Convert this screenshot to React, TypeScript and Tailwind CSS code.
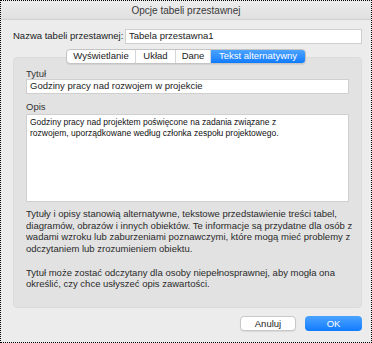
import React from "react";

const tabs = [
  { label: "Wyświetlanie", w: "w-[69px]" },
  { label: "Układ", w: "w-[40px]" },
  { label: "Dane", w: "w-[35px]" },
  { label: "Tekst alternatywny", w: "w-[94px]" },
];

const App = () => {
  return (
    <div className="w-[372px] h-[343px] border border-dotted border-black bg-[#ececec] flex flex-col font-['Liberation_Sans',Arial,sans-serif] text-[9.5px] text-[#222]">
      <div className="h-[19px] shrink-0 flex items-center justify-center bg-gradient-to-b from-[#ececec] to-[#e0e0e0] border-b border-[#d0d0d0] text-[10px] text-[#3a3a3a]">
        Opcje tabeli przestawnej
      </div>

      <div className="flex items-center mt-[9px] pl-[12px] pr-[9px]">
        <span className="w-[112px] text-[#222]">Nazwa tabeli przestawnej:</span>
        <div className="flex-1 h-[15px] bg-white border border-[#cfcfcf] flex items-center pl-[3px]">
          Tabela przestawna1
        </div>
      </div>

      <div className="flex justify-center mt-[5px] relative z-10 -mb-[7px]">
        <div className="flex h-[15px] rounded-[4px] border border-[#c4c4c4] bg-white shadow-[0_1px_1px_rgba(0,0,0,0.08)] overflow-hidden">
          {tabs.map((t, i) => (
            <div
              key={t.label}
              className={
                i === 3
                  ? `${t.w} flex items-center justify-center bg-gradient-to-b from-[#4aa3ff] to-[#0b7bff] text-white`
                  : `${t.w} flex items-center justify-center border-r border-[#d6d6d6] text-[#222]`
              }
            >
              {t.label}
            </div>
          ))}
        </div>
      </div>

      <div className="mx-[12px] mr-[9px] h-[251px] rounded-[4px] bg-[#e2e2e2] border border-[#dcdcdc] pt-[10px] px-[12px] flex flex-col">
        <div className="text-[#333] leading-[11px]">Tytuł</div>
        <div className="h-[15px] bg-white border border-[#cfcfcf] flex items-center pl-[3px] text-[#222]">
          Godziny pracy nad rozwojem w projekcie
        </div>
        <div className="mt-[7px] text-[#333] leading-[11px]">Opis</div>
        <div className="mt-[2px] h-[88px] bg-white border border-[#cfcfcf] px-[3px] pt-[2px] text-[8.5px] leading-[10.7px] text-[#111] whitespace-nowrap">
          Godziny pracy nad projektem poświęcone na zadania związane z
          <br />
          rozwojem, uporządkowane według członka zespołu projektowego.
        </div>
        <div className="mt-[6px] leading-[11.7px] text-[#2a2a2a] whitespace-nowrap">
          <p>
            Tytuły i opisy stanowią alternatywne, tekstowe przedstawienie treści tabel,
            <br />
            diagramów, obrazów i innych obiektów. Te informacje są przydatne dla osób z
            <br />
            wadami wzroku lub zaburzeniami poznawczymi, które mogą mieć problemy z
            <br />
            odczytaniem lub zrozumieniem obiektu.
          </p>
          <p className="mt-[11.7px]">
            Tytuł może zostać odczytany dla osoby niepełnosprawnej, aby mogła ona
            <br />
            określić, czy chce usłyszeć opis zawartości.
          </p>
        </div>
      </div>

      <div className="flex justify-end gap-[9px] mt-[8px] pr-[9px]">
        <button className="w-[56px] h-[15px] rounded-[4px] bg-white border border-[#c8c8c8] shadow-[0_1px_1px_rgba(0,0,0,0.08)] text-[#222] text-[9.5px] leading-none">
          Anuluj
        </button>
        <button className="w-[57px] h-[15px] rounded-[4px] bg-gradient-to-b from-[#4aa3ff] to-[#0b7bff] text-white text-[9.5px] leading-none">
          OK
        </button>
      </div>
    </div>
  );
};

export default App;
